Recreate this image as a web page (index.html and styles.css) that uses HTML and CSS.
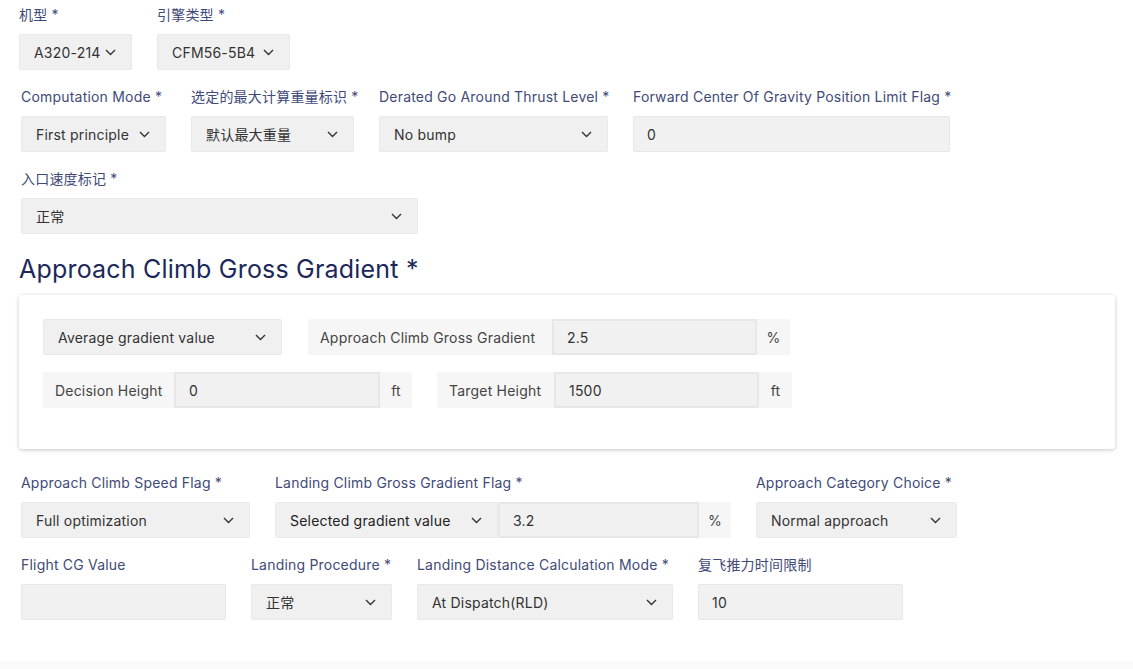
FILE: index.html
```html
<!DOCTYPE html>
<html lang="zh">
<head>
<meta charset="utf-8">
<title>Approach Climb</title>
<link rel="stylesheet" href="styles.css">
</head>
<body>
<div class="page">
  <div class="row">
    <div class="field">
      <label class="lbl">机型 *</label>
      <div class="select w113"><span>A320-214</span><svg class="chev" viewBox="0 0 11 7"><polyline points="1,1 5.5,5.5 10,1"/></svg></div>
    </div>
    <div class="field">
      <label class="lbl">引擎类型 *</label>
      <div class="select w133"><span>CFM56-5B4</span><svg class="chev" viewBox="0 0 11 7"><polyline points="1,1 5.5,5.5 10,1"/></svg></div>
    </div>
  </div>

  <div class="row inset">
    <div class="field">
      <label class="lbl">Computation Mode *</label>
      <div class="select w145"><span>First principle</span><svg class="chev" viewBox="0 0 11 7"><polyline points="1,1 5.5,5.5 10,1"/></svg></div>
    </div>
    <div class="field">
      <label class="lbl">选定的最大计算重量标识 *</label>
      <div class="select w163"><span>默认最大重量</span><svg class="chev" viewBox="0 0 11 7"><polyline points="1,1 5.5,5.5 10,1"/></svg></div>
    </div>
    <div class="field">
      <label class="lbl">Derated Go Around Thrust Level *</label>
      <div class="select w229"><span>No bump</span><svg class="chev" viewBox="0 0 11 7"><polyline points="1,1 5.5,5.5 10,1"/></svg></div>
    </div>
    <div class="field">
      <label class="lbl">Forward Center Of Gravity Position Limit Flag *</label>
      <div class="input w317">0</div>
    </div>
  </div>

  <div class="row inset">
    <div class="field">
      <label class="lbl">入口速度标记 *</label>
      <div class="select w397"><span>正常</span><svg class="chev" viewBox="0 0 11 7"><polyline points="1,1 5.5,5.5 10,1"/></svg></div>
    </div>
  </div>

  <h2 class="title">Approach Climb Gross Gradient *</h2>

  <div class="card">
    <div class="card-row gap26">
      <div class="select w239"><span>Average gradient value</span><svg class="chev" viewBox="0 0 11 7"><polyline points="1,1 5.5,5.5 10,1"/></svg></div>
      <div class="group">
        <div class="addon w244">Approach Climb Gross Gradient</div>
        <div class="input grp w205">2.5</div>
        <div class="addon suffix s33">%</div>
      </div>
    </div>
    <div class="card-row">
      <div class="group">
        <div class="addon w131">Decision Height</div>
        <div class="input grp w206">0</div>
        <div class="addon suffix">ft</div>
      </div>
      <div class="group">
        <div class="addon w117">Target Height</div>
        <div class="input grp w205">1500</div>
        <div class="addon suffix s33">ft</div>
      </div>
    </div>
  </div>

  <div class="row inset after-card">
    <div class="field">
      <label class="lbl">Approach Climb Speed Flag *</label>
      <div class="select w229"><span>Full optimization</span><svg class="chev" viewBox="0 0 11 7"><polyline points="1,1 5.5,5.5 10,1"/></svg></div>
    </div>
    <div class="field">
      <label class="lbl">Landing Climb Gross Gradient Flag *</label>
      <div class="group">
        <div class="select w223 sel-dark"><span>Selected gradient value</span><svg class="chev" viewBox="0 0 11 7"><polyline points="1,1 5.5,5.5 10,1"/></svg></div>
        <div class="input grp w201">3.2</div>
        <div class="addon suffix">%</div>
      </div>
    </div>
    <div class="field">
      <label class="lbl">Approach Category Choice *</label>
      <div class="select w201"><span>Normal approach</span><svg class="chev" viewBox="0 0 11 7"><polyline points="1,1 5.5,5.5 10,1"/></svg></div>
    </div>
  </div>

  <div class="row inset">
    <div class="field">
      <label class="lbl">Flight CG Value</label>
      <div class="input w205"></div>
    </div>
    <div class="field">
      <label class="lbl">Landing Procedure *</label>
      <div class="select w141"><span>正常</span><svg class="chev" viewBox="0 0 11 7"><polyline points="1,1 5.5,5.5 10,1"/></svg></div>
    </div>
    <div class="field">
      <label class="lbl">Landing Distance Calculation Mode *</label>
      <div class="select w256"><span>At Dispatch(RLD)</span><svg class="chev" viewBox="0 0 11 7"><polyline points="1,1 5.5,5.5 10,1"/></svg></div>
    </div>
    <div class="field">
      <label class="lbl">复飞推力时间限制</label>
      <div class="input w205">10</div>
    </div>
  </div>
</div>
<div class="footer-strip"></div>
</body>
</html>
```

FILE: styles.css
```css
html, body {
  margin: 0;
  padding: 0;
  background: #ffffff;
}
body {
  font-family: Inter, "Noto Sans CJK SC", sans-serif;
  font-size: 14px;
  letter-spacing: 0.2px;
  color: #333;
  height: 669px;
  overflow: hidden;
  position: relative;
}
.page {
  padding: 5px 18px 0 19px;
}
.row {
  display: flex;
  gap: 25px;
  margin-bottom: 17px;
  align-items: flex-start;
}
.row.inset {
  margin-left: 2px;
}
.row.after-card {
  margin-top: 24px;
  margin-bottom: 17px;
}
.field {
  display: flex;
  flex-direction: column;
}
.lbl {
  display: block;
  width: 0;
  overflow: visible;
  height: 20px;
  line-height: 20px;
  margin-bottom: 9px;
  color: #414a78;
  font-size: 14px;
  white-space: nowrap;
}
.select, .input, .addon {
  box-sizing: border-box;
  height: 36px;
  display: flex;
  align-items: center;
  font-size: 14px;
  color: #333;
  white-space: nowrap;
}
.select {
  background: #f0f0f0;
  border: 1px solid #e9e9e9;
  border-radius: 2px;
  padding: 0 15px 0 14px;
  justify-content: space-between;
}
.sel-dark span {
  color: #222;
}
.input {
  background: #f1f1f1;
  border: 1px solid #e7e7e7;
  border-radius: 2px;
  padding: 0 13px;
}
.input.grp {
  border-width: 2px;
  border-radius: 0;
}
.addon {
  background: #f6f6f6;
  padding: 0 12px;
  color: #444;
}
.addon.suffix {
  width: 32px;
  justify-content: center;
  padding: 0;
}
.addon.suffix.s33 {
  width: 33px;
}
.group {
  display: flex;
}
.chev {
  width: 11px;
  height: 7px;
  flex: none;
  fill: none;
  stroke: #333;
  stroke-width: 1.4;
}
.title {
  margin: 19px 0 10px 0;
  font-size: 25px;
  line-height: 32px;
  font-weight: 400;
  letter-spacing: 0.2px;
  color: #1d285a;
}
.card {
  box-sizing: border-box;
  width: 1096px;
  height: 154px;
  background: #fff;
  border-radius: 3px;
  box-shadow: 0 1px 4px rgba(0,0,0,0.22);
  padding: 24px 24px;
}
.card-row {
  display: flex;
  gap: 25px;
  margin-bottom: 17px;
}
.card-row.gap26 {
  gap: 26px;
}
.footer-strip {
  position: absolute;
  left: 0;
  right: 0;
  bottom: 0;
  height: 8px;
  background: #fafafa;
}
.w113 { width: 113px; }
.w117 { width: 117px; }
.w131 { width: 131px; }
.w133 { width: 133px; }
.w141 { width: 141px; }
.w145 { width: 145px; }
.w163 { width: 163px; }
.w201 { width: 201px; }
.w205 { width: 205px; }
.w206 { width: 206px; }
.w223 { width: 223px; }
.w229 { width: 229px; }
.w239 { width: 239px; }
.w244 { width: 244px; }
.w256 { width: 256px; }
.w317 { width: 317px; }
.w397 { width: 397px; }
```
